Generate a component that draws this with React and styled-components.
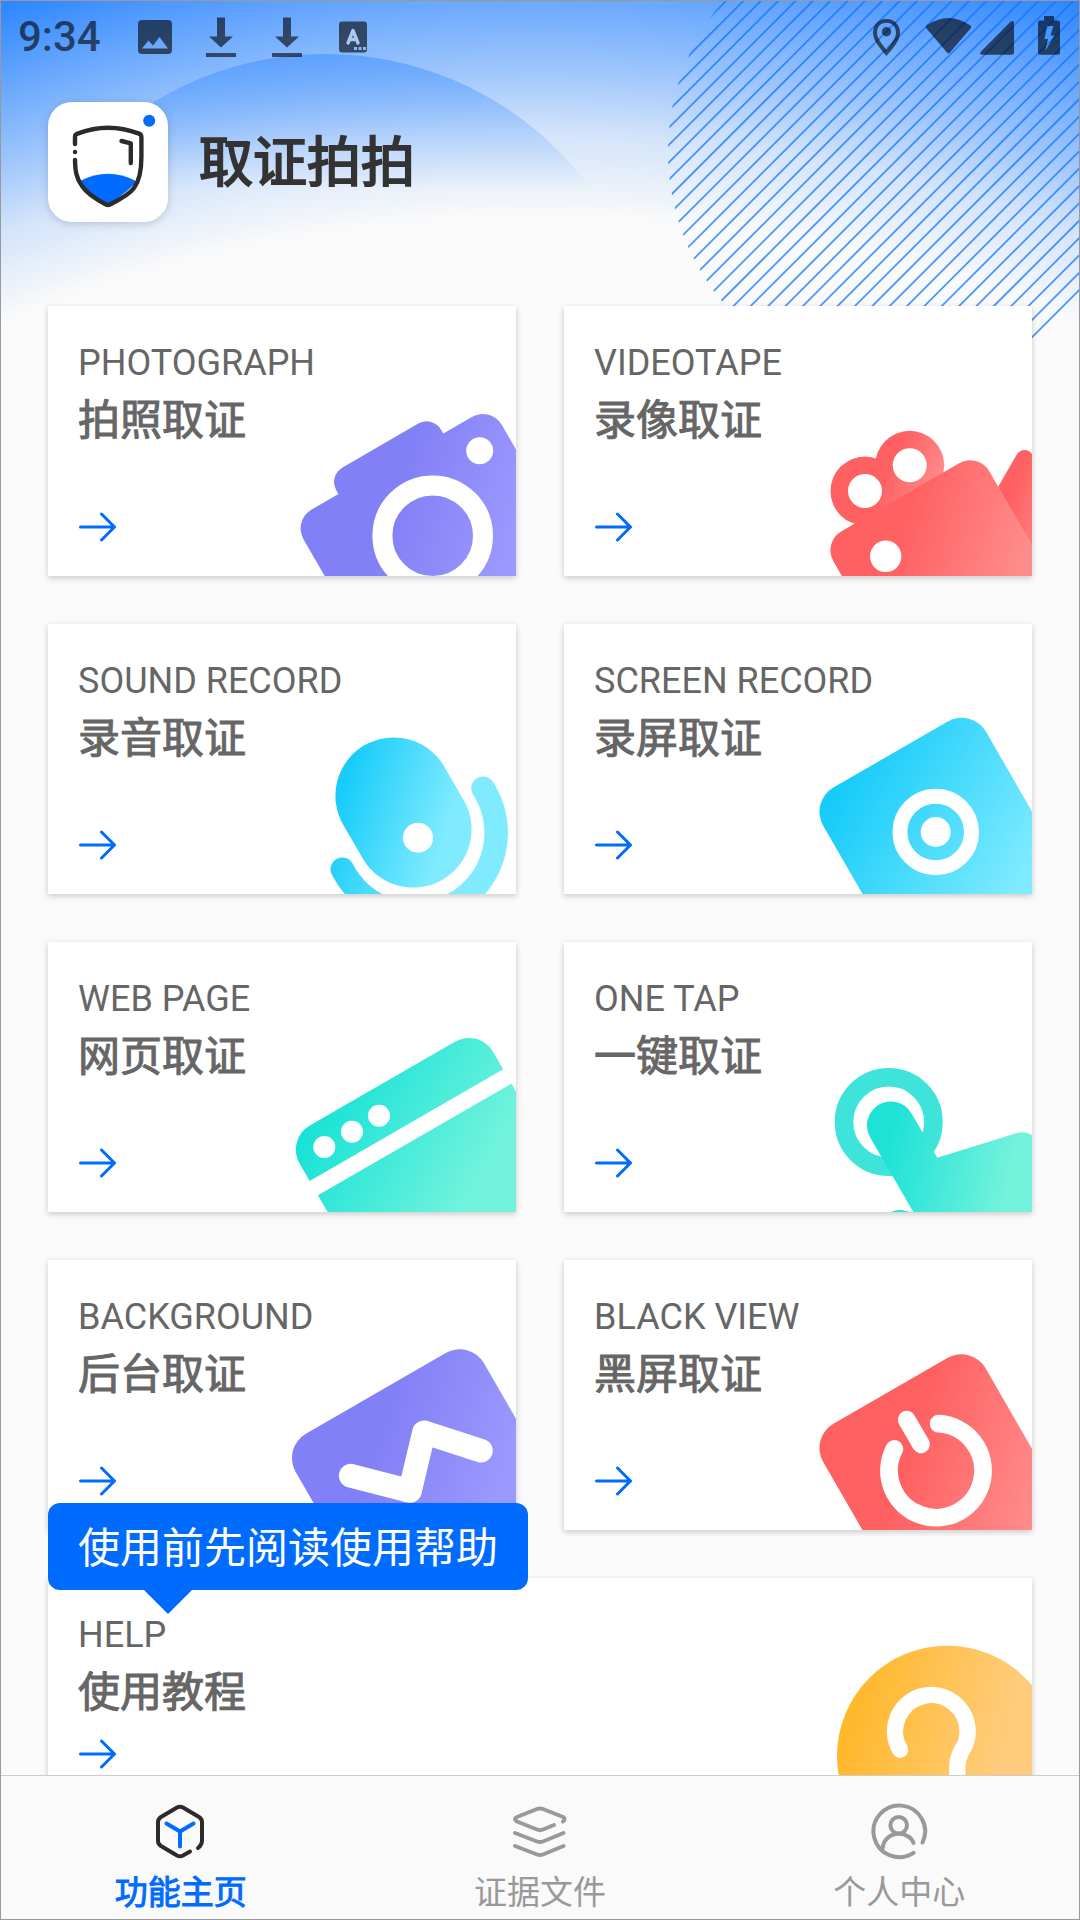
import React from 'react'
import styled, { createGlobalStyle } from 'styled-components'


const BLUE = '#006bff'
const INK = 'rgba(0, 0, 0, .6)'

const GlobalStyle = createGlobalStyle`
    * { box-sizing: border-box; }
    body {
        margin: 0;
        background: #fafafa;
        font-family: Roboto, 'Noto Sans CJK SC', sans-serif;
    }
    a { color: inherit; text-decoration: none; }
    h1, h2, p { margin: 0; }
    svg { display: block; flex: none; }
`
const Screen = styled.div`
    height: 100vh;
    display: flex;
    flex-direction: column;
    border: 1px solid #999;
    background: #fafafa;
`
const Scroller = styled.div`
    position: relative;
    flex: 1;
    min-height: 0;
    overflow-x: hidden;
    overflow-y: auto;
    scrollbar-width: none;
`
const Backdrop = styled.svg`
    position: absolute;
    top: 0;
    left: 0;
    width: 100%;
`
const Content = styled.div`
    position: relative;
`
const StatusBar = styled.div`
    height: 71px;
    display: flex;
    align-items: center;
    justify-content: space-between;
    padding: 0 9px 0 17px;
    color: ${INK};
`
const StatusGroup = styled.div`
    display: flex;
    align-items: center;
`
const Time = styled.time`
    width: 104px;
    font-size: 42px;
    line-height: 72px;
    font-weight: 500;
`
const StatusIcon = styled.svg`
    height: 72px;
    fill: currentColor;
`
const Header = styled.header`
    display: flex;
    align-items: center;
    gap: 31px;
    padding: 30px 47px 84px;

    h1 {
        padding-top: 4px;
        font-size: 54px;
        line-height: 80px;
        font-weight: 400;
        -webkit-text-stroke: 2px currentColor;
        color: #333;
    }
`
const Logo = styled.div`
    width: 120px;
    height: 120px;
    border-radius: 24px;
    background: #fff;
    box-shadow: 0 2px 8px rgba(0, 0, 0, .16);
`
const CardGrid = styled.main`
    display: grid;
    grid-template-columns: 1fr 1fr;
    gap: 48px;
    padding: 0 47px 48px;
`
const Card = styled.a`
    display: grid;
    height: ${p => p.$short ? '225px' : '270px'};
    overflow: hidden;
    background: #fff;
    color: #666;
    box-shadow: 0 2px 6px rgba(0, 0, 0, .2);
`
const CardText = styled.div`
    grid-area: 1 / 1;
    z-index: 1;
    display: flex;
    flex-direction: column;
    padding: 36px 30px 34px;

    p {
        font-size: 36px;
        line-height: 42px;
    }
    h2 {
        margin-top: 9px;
        font-size: 42px;
        line-height: 56px;
        font-weight: 400;
        -webkit-text-stroke: 1px currentColor;
    }
    svg { margin-top: auto; }
`
const CardArt = styled.svg`
    grid-area: 1 / 1;
    justify-self: end;
    align-self: end;
`
const HelpSlot = styled.div`
    position: relative;
    grid-column: 1 / -1;
`
const Tooltip = styled.div`
    position: absolute;
    z-index: 2;
    left: 0;
    top: -75px;
    padding: 4px 30px 0;
    border-radius: 12px;
    background: ${BLUE};
    color: #fff;
    font-size: 42px;
    line-height: 83px;
    white-space: nowrap;

    &::after {
        content: '';
        position: absolute;
        left: 96px;
        top: 100%;
        border: 24px solid transparent;
        border-bottom: 0;
        border-top-color: ${BLUE};
    }
`
const TabBar = styled.nav`
    display: flex;
    height: 144px;
    border-top: 1px solid #ccc;
    background: #fafafa;
`
const Tab = styled.a`
    flex: 1;
    display: flex;
    flex-direction: column;
    align-items: center;
    gap: 9px;
    padding-top: 26px;
    color: ${p => p.$active ? BLUE : '#999'};
    font-size: 33px;
    line-height: 44px;
    -webkit-text-stroke: ${p => p.$active ? '1px currentColor' : '0'};

    svg {
        fill: none;
        stroke: currentColor;
        stroke-width: 4;
        stroke-linecap: round;
        stroke-linejoin: round;
    }
`


/* diagonal hatching, cut to a circle in the top right corner */
const HATCH = Array.from({ length: 39 }, (_, i) => 727 + i * 17.36)

const HeaderBackdrop = () => (
    <Backdrop viewBox='1 1 1078 400' aria-hidden='true'>
        <defs>
            <radialGradient id='sky' gradientUnits='userSpaceOnUse' cx='540' cy='1651' r='1737'>
                <stop offset='.825' stopColor='#2a84ff' stopOpacity='0' />
                <stop offset='.874' stopColor='#2a84ff' stopOpacity='.19' />
                <stop offset='.91' stopColor='#2a84ff' stopOpacity='.44' />
                <stop offset='1' stopColor='#2a84ff' />
            </radialGradient>
            <linearGradient id='hill' gradientUnits='userSpaceOnUse' x1='325' y1='54' x2='325' y2='190'>
                <stop offset='0' stopColor='#2a84ff' stopOpacity='.45' />
                <stop offset='1' stopColor='#2a84ff' stopOpacity='0' />
            </linearGradient>
            <clipPath id='hatch'><circle cx='902' cy='152' r='234' /></clipPath>
        </defs>
        <rect width='1080' height='400' fill='url(#sky)' />
        <circle cx='325' cy='384' r='330' fill='url(#hill)' />
        <g clipPath='url(#hatch)' stroke='#1274ff' strokeOpacity='.75' strokeWidth='1.8'>
            {HATCH.map(x => <line key={x} x1={x} y1='0' x2={x - 400} y2='400' />)}
        </g>
    </Backdrop>
)

const Arrow = () => (
    <svg width='38' height='30' viewBox='0 0 38 30' fill='none' stroke={BLUE} strokeWidth='3' strokeLinecap='round' strokeLinejoin='round'>
        <path d='M2.500 15H36.500M23.500 2L36.500 15L23.500 28' />
    </svg>
)

const LogoMark = () => (
    <svg width='120' height='120' viewBox='0 0 120 120' fill='none' stroke='#2b2b2b' strokeWidth='4.4' strokeLinecap='round' strokeLinejoin='round'>
        <path d='M32 79Q60 64.500 88 79Q85 86 60 103Q36 88 32 79Z' fill={BLUE} stroke='none' />
        <path d='M27 42V35Q27 32.500 29.500 31.600Q60 19.800 91 31.600Q93.300 32.500 93.400 35V55C93.400 68 92 78 86 86Q81 93 62 102.500Q60 103.500 58 102.500Q40 93 34 84C28 76 27.200 68 27 58' />
        <path d='M27 50V50.100' />
        <path d='M73.500 39L82.800 41.300V61' />
        <circle cx='101.200' cy='18.700' r='6' fill={BLUE} stroke='none' />
    </svg>
)

/* outline of a rounded box whose top left corner is at ox, oy, turned 30 degrees to the left */
const tilted = (ox, oy, x, y, w, h, r) => {
    const at = (u, v) => `${(ox + u * 0.866 + v * 0.5).toFixed(1)} ${(oy - u * 0.5 + v * 0.866).toFixed(1)}`
    const arc = `A${r} ${r} 0 0 1 `
    return `M${at(x + r, y)}L${at(x + w - r, y)}${arc}${at(x + w, y + r)}`
        + `L${at(x + w, y + h - r)}${arc}${at(x + w - r, y + h)}`
        + `L${at(x + r, y + h)}${arc}${at(x, y + h - r)}`
        + `L${at(x, y + r)}${arc}${at(x + r, y)}Z`
}

/* shapes use the coordinates of the card they sit in; the view shows its right end */
const Art = ({ id, colors, from, to, view = '228 60 240 210', height = 210, children }) => (
    <CardArt width='240' height={height} viewBox={view} fill={`url(#${id})`} aria-hidden='true'>
        <defs>
            <linearGradient id={id} gradientUnits='userSpaceOnUse' x1={from[0]} y1={from[1]} x2={to[0]} y2={to[1]}>
                <stop offset='0' stopColor={colors[0]} />
                <stop offset='1' stopColor={colors[1]} />
            </linearGradient>
        </defs>
        {children}
    </CardArt>
)

const PURPLE = ['#8280f6', '#9b98fe']
const RED = ['#ff6061', '#ff8c8c']
const CYAN = ['#18ccf9', '#80ebff']
const GREEN = ['#17e2d6', '#73f3dd']
const AMBER = ['#ffb82a', '#ffcc7d']

const PhotoArt = () => (
    <Art id='art-photo' colors={PURPLE} from={[355, 170]} to={[472, 205]}>
        <path d={tilted(244.6, 214.4, 0, 0, 229, 180, 22)} />
        <path d={tilted(244.6, 214.4, 53, -21, 121, 60, 16.7)} />
        <circle cx='384.700' cy='229.700' r='50.300' fill='none' stroke='#fff' strokeWidth='20' />
        <circle cx='431.700' cy='144.700' r='13.500' fill='#fff' />
    </Art>
)

const VideoArt = () => (
    <Art id='art-video' colors={RED} from={[345, 200]} to={[466, 236]}>
        <defs>
            <linearGradient id='art-reel' gradientUnits='userSpaceOnUse' x1='326' y1='160' x2='374' y2='182'>
                <stop offset='0' stopColor={RED[0]} />
                <stop offset='1' stopColor={RED[1]} />
            </linearGradient>
            <linearGradient id='art-lens' gradientUnits='userSpaceOnUse' x1='450' y1='182' x2='500' y2='198'>
                <stop offset='0' stopColor={RED[0]} />
                <stop offset='1' stopColor={RED[1]} />
            </linearGradient>
        </defs>
        <circle cx='301' cy='185' r='34.500' fill='url(#art-reel)' />
        <circle cx='345.700' cy='159.300' r='34.500' fill='url(#art-reel)' />
        <path d='M301 185L345.700 159.300L370 172L296 215Z' fill='url(#art-reel)' />
        <circle cx='301' cy='185' r='17' fill='#fff' />
        <circle cx='345.700' cy='159.300' r='17' fill='#fff' />
        <path d='M434 181L452.500 149C456 143 464 142 468 148V240Z' fill='url(#art-lens)' />
        <path d={tilted(258.4, 236.2, 0, 0, 180, 150, 22)} />
        <circle cx='321.700' cy='250.300' r='15.700' fill='#fff' />
    </Art>
)

const SoundArt = () => (
    <Art id='art-sound' colors={CYAN} from={[290, 177]} to={[398, 212]}>
        <g fill='none' stroke='url(#art-sound)' strokeLinecap='round'>
            <path d='M345.700 171.700L365.300 205.300' strokeWidth='116.600' />
            <path d='M435 164.300A81.300 81.300 0 1 1 294.300 245.300' strokeWidth='23.600' />
        </g>
        <circle cx='370' cy='213.700' r='15' fill='#fff' />
    </Art>
)

const ScreenArt = () => (
    <Art id='art-screen' colors={CYAN} from={[280, 165]} to={[455, 265]}>
        <path d={tilted(245.2, 177.5, 0, 0, 188, 200, 28)} />
        <circle cx='371.700' cy='208' r='35.800' fill='none' stroke='#fff' strokeWidth='15' />
        <circle cx='371.700' cy='208' r='15' fill='#fff' />
    </Art>
)

const WebArt = () => (
    <Art id='art-web' colors={GREEN} from={[265, 175]} to={[420, 262]}>
        <path d={tilted(237.6, 197.4, 0, 0, 223.5, 260, 28)} />
        <g fill='#fff'>
            <path d={tilted(237.6, 197.4, -1, 48.2, 226, 16.4, 0)} />
            <circle cx='276.300' cy='205' r='11' />
            <circle cx='304' cy='189.700' r='11' />
            <circle cx='331' cy='173.700' r='11' />
        </g>
    </Art>
)

const TapArt = () => (
    <Art id='art-tap' colors={['#1fe2d7', '#73f2dc']} from={[322, 215]} to={[445, 238]}>
        <circle cx='324.700' cy='180' r='44.700' fill='none' stroke='#3ee4d9' strokeWidth='18.600' />
        <path d='M306.200 195.400A23.800 23.800 0 0 1 347.400 171.300L373.300 215.700L452 191.300Q460.500 188.500 468 193V270H349.300Z' />
        <circle cx='336' cy='289' r='21' fill='#1fe2d7' />
    </Art>
)

const BackgroundArt = () => (
    <Art id='art-background' colors={PURPLE} from={[335, 165]} to={[460, 203]}>
        <path d={tilted(233.7, 187.8, 0, 0, 217.4, 200, 28)} />
        <path d='M302.700 215.700L362 231L376 172.300L433 190.700' fill='none' stroke='#fff' strokeWidth='23.600' strokeLinecap='round' strokeLinejoin='round' />
    </Art>
)

const BlackArt = () => (
    <Art id='art-black' colors={RED} from={[350, 175]} to={[482, 216]}>
        <path d={tilted(245.2, 177.8, 0, 0, 187.5, 200, 28)} />
        <g fill='none' stroke='#fff' strokeWidth='17.800' strokeLinecap='round'>
            <path d='M374.700 163.700A47 47 0 1 1 330.300 189' />
            <path d='M342.700 159.700L357 184.300' />
        </g>
    </Art>
)

const HelpArt = () => (
    <Art id='art-help' colors={AMBER} from={[795, 155]} to={[952, 196]} view='744 0 240 225' height={225}>
        <circle cx='899.300' cy='178' r='110.300' />
        <path d='M852 171.700A36.300 36.300 0 1 1 919.600 153.700C919.600 163 916.500 168 913 174C909.500 181 909 186 909.300 192V225' fill='none' stroke='#fff' strokeWidth='16.400' strokeLinecap='round' />
    </Art>
)

const features = [
    { id: 'photograph', label: 'PHOTOGRAPH', title: '拍照取证', Picture: PhotoArt },
    { id: 'videotape', label: 'VIDEOTAPE', title: '录像取证', Picture: VideoArt },
    { id: 'sound', label: 'SOUND RECORD', title: '录音取证', Picture: SoundArt },
    { id: 'screen', label: 'SCREEN RECORD', title: '录屏取证', Picture: ScreenArt },
    { id: 'web', label: 'WEB PAGE', title: '网页取证', Picture: WebArt },
    { id: 'tap', label: 'ONE TAP', title: '一键取证', Picture: TapArt },
    { id: 'background', label: 'BACKGROUND', title: '后台取证', Picture: BackgroundArt },
    { id: 'black', label: 'BLACK VIEW', title: '黑屏取证', Picture: BlackArt },
]

const FeatureCard = ({ id, label, title, Picture, short }) => (
    <Card href={`#${id}`} $short={short}>
        <CardText>
            <p>{label}</p>
            <h2>{title}</h2>
            <Arrow />
        </CardText>
        <Picture />
    </Card>
)

const DownloadIcon = () => (
    <StatusIcon width='66' viewBox='0 0 66 72'>
        <path d='M29 16.500H37V35.500H45L33 46.500L21 35.500H29ZM18 52H48V56H18Z' />
    </StatusIcon>
)

const Status = () => (
    <StatusBar>
        <StatusGroup>
            <Time>9:34</Time>
            <StatusIcon width='66' viewBox='0 0 66 72'>
                <path fillRule='evenodd' d='M20 19H46Q50 19 50 23V49Q50 53 46 53H20Q16 53 16 49V23Q16 19 20 19ZM20 47.500H46L37.500 36L31 44.500L26.500 39.500Z' />
            </StatusIcon>
            <DownloadIcon />
            <DownloadIcon />
            <StatusIcon width='66' viewBox='0 0 66 72'>
                <path fillRule='evenodd' d='M22 20.500H44Q47 20.500 47 23.500V48.500Q47 51.500 44 51.500H22Q19 51.500 19 48.500V23.500Q19 20.500 22 20.500ZM34 46V49H37V46ZM38.500 46V49H41.500V46ZM43 46V49H46V46Z' />
                <path d='M28 42L33 29.500L38 42M29.500 38.500H36.500' fill='none' stroke='#a9c9f5' strokeWidth='3.400' strokeLinecap='round' strokeLinejoin='round' />
            </StatusIcon>
        </StatusGroup>
        <StatusGroup>
            <StatusIcon width='56' viewBox='860 0 56 72'>
                <path fillRule='evenodd' d='M886.500 18C894.500 18 900 24 900 31.500C900 40 893 47 886.500 55C880 47 873 40 873 31.500C873 24 878.500 18 886.500 18ZM886.500 21.800C880.500 21.800 877 26 877 31.500C877 37.500 882 43 886.500 49C891 43 896 37.500 896 31.500C896 26 892.500 21.800 886.500 21.800Z' />
                <circle cx='886.500' cy='30.800' r='4.700' />
            </StatusIcon>
            <StatusIcon width='60' viewBox='916 0 60 72'>
                <path d='M926.500 24.500Q948.500 9.500 970.500 24.500Q972 25.500 970.500 27.500L950 51.500Q948.500 53.300 947 51.500L926.500 27.500Q925 25.500 926.500 24.500Z' />
            </StatusIcon>
            <StatusIcon width='44' viewBox='976 0 44 72'>
                <path d='M1010.500 20.800Q1014 18.500 1014 22V51.500Q1014 53.700 1012 53.700H982Q979 53.700 981 50.500Z' />
            </StatusIcon>
            <StatusIcon width='50' viewBox='1020 0 50 72'>
                <path fillRule='evenodd' d='M1044 15H1054V19.500H1058Q1060 19.500 1060 21.500V51.700Q1060 53.700 1058 53.700H1040Q1038 53.700 1038 51.700V21.500Q1038 19.500 1040 19.500H1044ZM1047 25L1044.500 38H1048L1045.500 49.500L1054.500 34.500H1050.500L1053.500 25Z' />
            </StatusIcon>
        </StatusGroup>
    </StatusBar>
)

const App = () => (
    <>
        <GlobalStyle />
        <Screen>
            <Scroller>
                <HeaderBackdrop />
                <Content>
                    <Status />
                    <Header>
                        <Logo><LogoMark /></Logo>
                        <h1>取证拍拍</h1>
                    </Header>
                    <CardGrid>
                        {features.map(feature => <FeatureCard key={feature.id} {...feature} />)}
                        <HelpSlot>
                            <Tooltip role='tooltip'>使用前先阅读使用帮助</Tooltip>
                            <FeatureCard id='help' label='HELP' title='使用教程' Picture={HelpArt} short />
                        </HelpSlot>
                    </CardGrid>
                </Content>
            </Scroller>
            <TabBar>
                <Tab href='#home' $active aria-current='page'>
                    <svg width='60' height='60' viewBox='1 0 60 60'>
                        <path stroke='#2b2b2b' d='M48 46Q52 43 52 38V20Q52 17 49 15L33 5.500Q30 4 27 5.500L11 15Q8 17 8 20V39Q8 42 11 44L27 53.500Q30 55 33 53.500L40 49.500' />
                        <path d='M16.500 21.500L30 29.500L43.500 21.500M30 29.500V44.500' />
                    </svg>
                    功能主页
                </Tab>
                <Tab href='#files'>
                    <svg width='60' height='60' viewBox='0 0 60 60'>
                        <path d='M53 19.500Q56 17 53 15L33 7Q30 5.800 27 7L7 15Q3 17 7 19.500L27 27.500Q30 28.800 33 27.500L44 23' />
                        <path d='M5 31L27 39.500Q30 40.700 33 39.500L53.500 31M5 44L27 52.500Q30 53.700 33 52.500L53.500 44' />
                    </svg>
                    证据文件
                </Tab>
                <Tab href='#me'>
                    <svg width='60' height='60' viewBox='0 0 60 60'>
                        <path d='M53.500 40.500A25.800 25.800 0 1 0 44.500 50.800' />
                        <circle cx='29.700' cy='23.300' r='8.300' />
                        <path d='M13.500 47C14 38 21 31.800 29.700 31.800C37 31.800 43 36 44.500 41' />
                    </svg>
                    个人中心
                </Tab>
            </TabBar>
        </Screen>
    </>
)

export default App
